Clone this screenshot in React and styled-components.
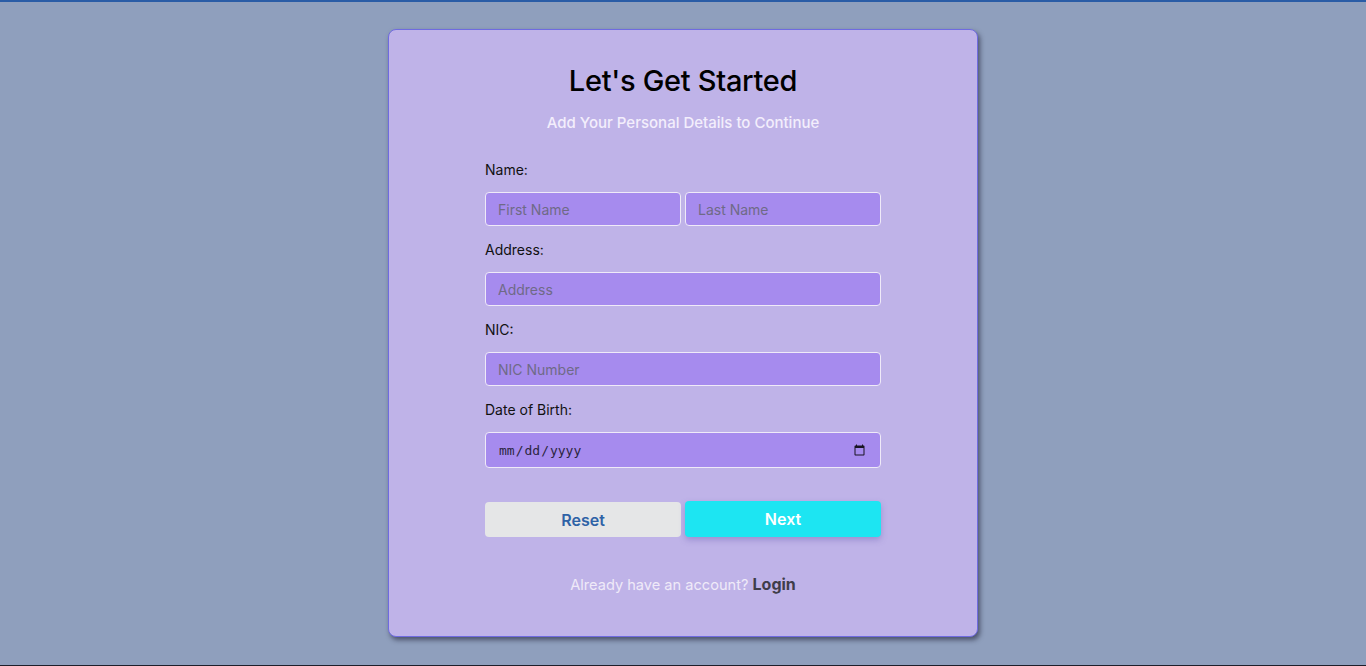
import React from "react";
import styled, { createGlobalStyle } from "styled-components";

const Global = createGlobalStyle`
  html, body { margin: 0; padding: 0; }
  body { font-family: Inter, "Noto Sans", sans-serif; background: #8f9fbd; }
  * { box-sizing: border-box; }
`;

const Page = styled.div`
  min-height: 666px;
  height: 666px;
  border-top: 2px solid #2a5ca6;
  border-bottom: 1px solid #1e1e2a;
  background: #8f9fbd;
  display: flex;
  justify-content: center;
  align-items: flex-start;
  padding-top: 27px;
`;

const Card = styled.div`
  width: 590px;
  background: #bfb3e8;
  border: 1px solid #6f6be0;
  border-radius: 8px;
  box-shadow: 2px 3px 5px rgba(20, 20, 40, 0.55);
  padding: 33px 96px 41px;
  display: flex;
  flex-direction: column;
`;

const Title = styled.h1`
  margin: 0;
  font-size: 29px;
  line-height: 36px;
  font-weight: 500;
  color: #000;
  text-align: center;
  letter-spacing: -0.3px;
`;

const Subtitle = styled.p`
  margin: 14px 0 0;
  font-size: 15px;
  line-height: 20px;
  font-weight: 450;
  color: #f3eefc;
  text-align: center;
`;

const Label = styled.label`
  display: block;
  margin-top: ${(p) => p.$top || 14}px;
  font-size: 14px;
  line-height: 20px;
  font-weight: 400;
  color: #111;
`;

const Row = styled.div`
  display: grid;
  grid-template-columns: ${(p) => (p.$cols === 2 ? "1fr 1fr" : "1fr")};
  gap: 4px;
  margin-top: 12px;
`;

const Input = styled.input`
  width: 100%;
  height: ${(p) => p.$h || 34}px;
  border: 1px solid #efeaf8;
  border-radius: 4px;
  background: #a68bee;
  padding: 0 12px;
  font-family: Inter, "Noto Sans", sans-serif;
  font-size: 14px;
  color: #222;
  outline: none;
  &::placeholder { color: #6f6a86; }
`;

const DateInput = styled(Input)`
  font-family: "DejaVu Sans Mono", monospace;
  font-size: 13px;
  color: #2b2540;
  &::-webkit-calendar-picker-indicator { opacity: 0.85; }
`;

const Buttons = styled.div`
  display: grid;
  grid-template-columns: 1fr 1fr;
  gap: 4px;
  margin-top: 33px;
  align-items: center;
`;

const Button = styled.button`
  height: ${(p) => (p.$primary ? 36 : 35)}px;
  margin-top: ${(p) => (p.$primary ? 0 : 1)}px;
  border: none;
  border-radius: 4px;
  background: ${(p) => (p.$primary ? "#1de5f2" : "#e5e6e7")};
  color: ${(p) => (p.$primary ? "#ffffff" : "#2e62a6")};
  box-shadow: ${(p) => (p.$primary ? "0 3px 6px rgba(90, 80, 170, 0.35)" : "none")};
  font-family: Inter, "Noto Sans", sans-serif;
  font-size: 16px;
  font-weight: 600;
  cursor: pointer;
`;

const Footer = styled.p`
  margin: 37px 0 0;
  text-align: center;
  font-size: 14.6px;
  line-height: 20px;
  color: #efeaf8;
`;

const LoginLink = styled.a`
  color: #3f3d4a;
  font-weight: 700;
  font-size: 16px;
  text-decoration: none;
`;

export default function App() {
  return (
    <>
      <Global />
      <Page>
        <Card>
          <Title>Let's Get Started</Title>
          <Subtitle>Add Your Personal Details to Continue</Subtitle>

          <Label $top={27}>Name:</Label>
          <Row $cols={2}>
            <Input placeholder="First Name" />
            <Input placeholder="Last Name" />
          </Row>

          <Label>Address:</Label>
          <Row>
            <Input placeholder="Address" />
          </Row>

          <Label>NIC:</Label>
          <Row>
            <Input placeholder="NIC Number" />
          </Row>

          <Label>Date of Birth:</Label>
          <Row>
            <DateInput type="date" $h={36} />
          </Row>

          <Buttons>
            <Button type="reset">Reset</Button>
            <Button $primary type="submit">Next</Button>
          </Buttons>

          <Footer>
            Already have an account? <LoginLink href="#">Login</LoginLink>
          </Footer>
        </Card>
      </Page>
    </>
  );
}
